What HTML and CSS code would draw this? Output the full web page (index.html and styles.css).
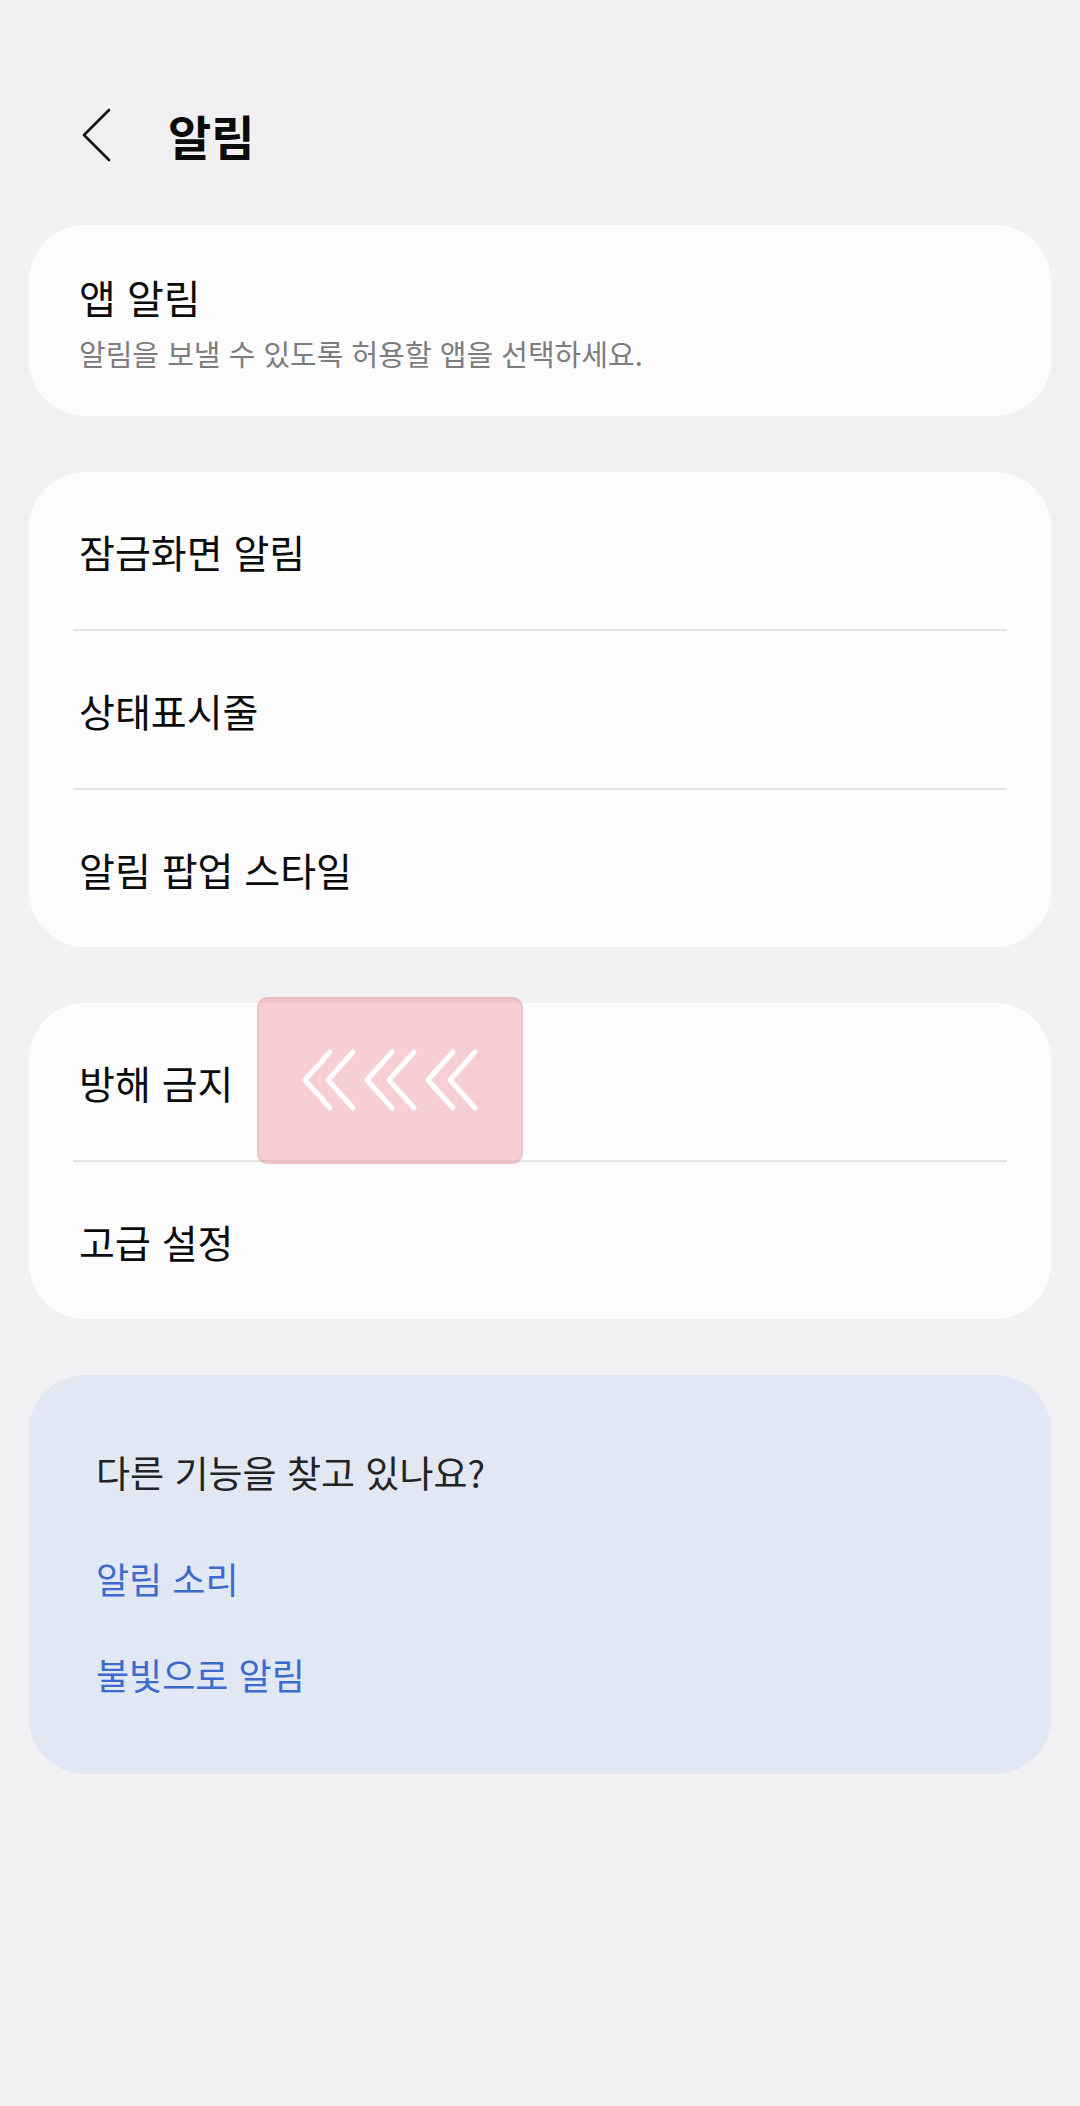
FILE: index.html
```html
<!DOCTYPE html>
<html lang="ko">
<head>
  <meta charset="UTF-8">
  <meta name="viewport" content="width=device-width, initial-scale=1.0">
  <title>알림</title>
  <link rel="stylesheet" href="styles.css">
</head>
<body>
  <div class="page">
    <header class="top-bar">
      <svg class="back-icon" viewBox="0 0 30 54" width="30" height="54">
        <path d="M28 2 L3 27 L28 52" fill="none" stroke="#111" stroke-width="2.6" stroke-linecap="round" stroke-linejoin="round"/>
      </svg>
      <h1 class="page-title">알림</h1>
    </header>

    <div class="card card-single">
      <div class="item-title">앱 알림</div>
      <div class="item-sub">알림을 보낼 수 있도록 허용할 앱을 선택하세요.</div>
    </div>

    <div class="card">
      <div class="row">잠금화면 알림</div>
      <div class="divider"></div>
      <div class="row">상태표시줄</div>
      <div class="divider"></div>
      <div class="row">알림 팝업 스타일</div>
    </div>

    <div class="card card-hint">
      <div class="row">방해 금지</div>
      <div class="divider"></div>
      <div class="row">고급 설정</div>

      <!-- swipe hint overlay -->
      <div class="swipe-hint">
        <svg viewBox="0 0 266 167" width="266" height="167">
          <g fill="none" stroke="#fff" stroke-width="5" stroke-linecap="round" stroke-linejoin="round">
            <path d="M73 55 L48 83 L73 111"/>
            <path d="M96 55 L71 83 L96 111"/>
            <path d="M135 55 L110 83 L135 111"/>
            <path d="M157 55 L132 83 L157 111"/>
            <path d="M196 55 L171 83 L196 111"/>
            <path d="M218 55 L193 83 L218 111"/>
          </g>
        </svg>
      </div>
    </div>

    <div class="card card-more">
      <div class="more-title">다른 기능을 찾고 있나요?</div>
      <a class="more-link first">알림 소리</a>
      <a class="more-link">불빛으로 알림</a>
    </div>
  </div>
</body>
</html>
```

FILE: styles.css
```css
body {
  margin: 0;
  padding: 0;
  background-color: #f1f1f3;
  font-family: "Noto Sans CJK KR", "Noto Sans", sans-serif;
  color: #0c0c0c;
}
.page {
  padding: 0 29px;
}
.top-bar {
  display: flex;
  align-items: center;
  height: 180px;
  padding-top: 45px;
}
.back-icon {
  margin-left: 52px;
  display: block;
}
.page-title {
  margin: 0 0 0 57px;
  font-size: 47px;
  font-weight: 700;
  line-height: 60px;
}
.card {
  position: relative;
  background: #fcfcfd;
  border-radius: 56px;
  margin-bottom: 56px;
}
.card-single {
  padding: 46px 50px 40px 50px;
  height: 105px;
}
.item-title {
  font-size: 40px;
  line-height: 52px;
}
.item-sub {
  margin-top: 10px;
  font-size: 29px;
  line-height: 40px;
  color: #7d7d7f;
}
.row {
  display: flex;
  align-items: center;
  height: 157px;
  padding-left: 50px;
  font-size: 39px;
}
.divider {
  height: 2px;
  margin: 0 44px;
  background: #e3e3e5;
}
.swipe-hint {
  position: absolute;
  left: 228px;
  top: -6px;
  width: 266px;
  height: 167px;
  border-radius: 11px;
  background: rgba(240, 140, 146, 0.4);
  box-shadow: inset 0 0 0 2px rgba(215, 110, 120, 0.12);
}
.swipe-hint svg {
  display: block;
}
.card-more {
  background: #e1e7f3;
  padding: 72px 67px 75px 67px;
}
.more-title {
  font-size: 37px;
  line-height: 50px;
  color: #222326;
}
.more-link {
  display: block;
  margin-top: 46px;
  font-size: 36px;
  line-height: 50px;
  color: #3b6bcc;
}
.more-link.first {
  margin-top: 56px;
}
```
